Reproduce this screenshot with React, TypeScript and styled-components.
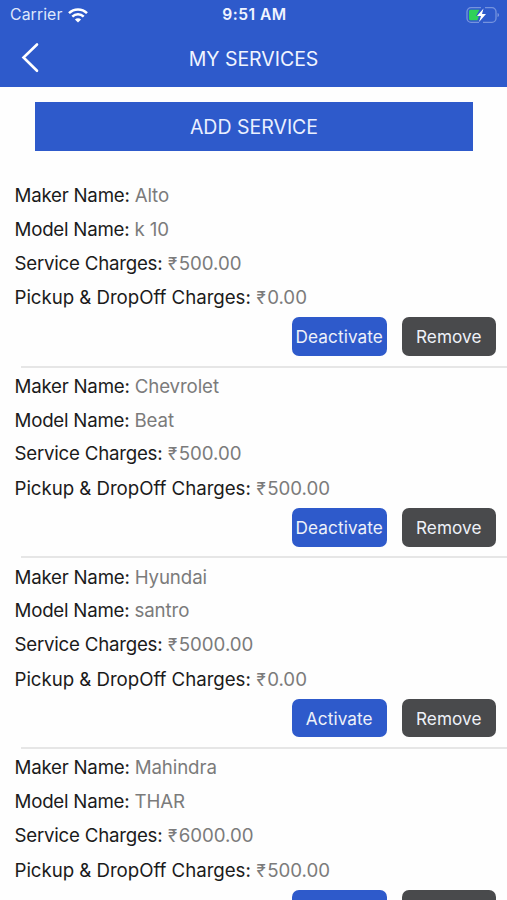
import React from 'react';
import styled, { createGlobalStyle } from 'styled-components';

const GlobalStyle = createGlobalStyle`
  * { box-sizing: border-box; }
  html, body { margin: 0; background: #fefefe; }
  body { overflow: hidden; }
`;

const Screen = styled.div`
  width: 507px;
  height: 900px;
  overflow: hidden;
  display: flex;
  flex-direction: column;
  background: #fefefe;
  font-family: Inter, "Noto Sans", sans-serif;
  color: #1b1b1b;
`;

const Header = styled.header`
  flex: none;
  height: 87px;
  background: #2e5acb;
  color: #f0f4ff;
`;

const StatusBar = styled.div`
  height: 29px;
  padding: 0 8px 0 10px;
  display: grid;
  grid-template-columns: 1fr auto 1fr;
  align-items: center;
`;

const Carrier = styled.div`
  display: flex;
  align-items: center;
  gap: 6px;
  font-size: 15.8px;
  line-height: 30px;
  letter-spacing: 0.1px;
  color: #dfe7fb;
`;

const Clock = styled.div`
  font-size: 15.6px;
  font-weight: 600;
  line-height: 30px;
  letter-spacing: 0.5px;
`;

const Battery = styled.svg`
  justify-self: end;
`;

const NavBar = styled.div`
  height: 58px;
  padding: 0 20px;
  display: grid;
  grid-template-columns: 1fr auto 1fr;
  align-items: center;
`;

const BackButton = styled.button`
  width: 22px;
  height: 32px;
  padding: 0;
  border: 0;
  background: none;
  color: #fff;
  svg { display: block; }
`;

const Title = styled.h1`
  margin: 0;
  padding-top: 2px;
  font-size: 19.5px;
  font-weight: 400;
  letter-spacing: -0.02px;
  white-space: nowrap;
`;

const AddButton = styled.button`
  flex: none;
  height: 49px;
  margin: 15px 34px 0 35px;
  border: 0;
  background: #2e5acb;
  color: #eaf0ff;
  font: 400 19.5px Inter, sans-serif;
  letter-spacing: 0;
`;

const List = styled.main`
  margin-top: 28px;
`;

const Card = styled.section`
  height: 190.8px;
  display: flex;
  flex-direction: column;
`;

const Field = styled.div<{ $tall?: boolean }>`
  height: ${(p) => (p.$tall ? 36 : 33.8)}px;
  line-height: ${(p) => (p.$tall ? 36 : 33.8)}px;
  padding-left: 14.5px;
  font-size: 18.7px;
  letter-spacing: ${(p) => (p.$tall ? -0.05 : -0.23)}px;
  white-space: nowrap;
`;

const Value = styled.span<{ $amount?: boolean }>`
  color: #7b7b7b;
  letter-spacing: ${(p) => (p.$amount ? 0 : -0.1)}px;
`;

const Rupee = styled.span`
  font-size: 17px;
  margin: 0 1.4px 0 0.6px;
`;

const Actions = styled.div`
  display: flex;
  justify-content: flex-end;
  gap: 15px;
  margin-top: 1px;
  padding-right: 11px;
`;

const Action = styled.button<{ $dark?: boolean }>`
  width: 94.5px;
  height: 38.5px;
  padding: 0;
  border: 0;
  border-radius: 7px;
  background: ${(p) => (p.$dark ? '#494a4c' : '#2e5acb')};
  color: #eef1f8;
  font: 400 17.2px Inter, sans-serif;
  letter-spacing: 0.08px;
`;

const Divider = styled.hr`
  width: 486px;
  height: 2px;
  margin: 9.7px 0 0 21px;
  border: 0;
  background: #e6e6e6;
`;

const services = [
  { maker: 'Alto', model: 'k 10', service: '500.00', pickup: '0.00', active: true },
  { maker: 'Chevrolet', model: 'Beat', service: '500.00', pickup: '500.00', active: true },
  { maker: 'Hyundai', model: 'santro', service: '5000.00', pickup: '0.00', active: false },
  { maker: 'Mahindra', model: 'THAR', service: '6000.00', pickup: '500.00', active: true },
];

function WifiIcon() {
  return (
    <svg width="20" height="15" viewBox="0 0 20 15" fill="none" stroke="#fff" strokeWidth="2.5">
      <path d="M1 5.2a12.8 12.8 0 0 1 18 0" />
      <path d="M4.3 8.7a8.1 8.1 0 0 1 11.4 0" />
      <path d="M10 14.6 6.9 11.5a4.4 4.4 0 0 1 6.2 0z" fill="#fff" stroke="none" />
    </svg>
  );
}

function BatteryIcon() {
  return (
    <Battery width="34" height="18" viewBox="0 0 34 18" fill="none">
      <path d="M16 1.7H6a4 4 0 0 0-4 4v6.6a4 4 0 0 0 4 4h8M20 1.7h7a4 4 0 0 1 4 4v6.6a4 4 0 0 1-4 4h-9" stroke="#7593de" strokeWidth="1.3" />
      <path d="M32.5 7v4c1.2-.4 1.6-1.1 1.6-2s-.4-1.6-1.6-2z" fill="#7593de" />
      <path d="M5.5 3.8h9L11 10h3l-1.5 4.2h-7A1.5 1.5 0 0 1 4 12.7V5.3a1.5 1.5 0 0 1 1.5-1.5z" fill="#30d158" />
      <path d="M18.5 2.500 12 10h4l-2 6 7-8h-4z" fill="#fff" />
    </Battery>
  );
}

function Amount({ value }: { value: string }) {
  return (
    <Value $amount>
      <Rupee>₹</Rupee>{value}
    </Value>
  );
}

export default function App() {
  return (
    <Screen>
      <GlobalStyle />
      <Header>
        <StatusBar>
          <Carrier>Carrier <WifiIcon /></Carrier>
          <Clock>9:51 AM</Clock>
          <BatteryIcon />
        </StatusBar>
        <NavBar>
          <BackButton aria-label="Back">
            <svg width="22" height="32" viewBox="0 0 22 32" fill="none" stroke="currentColor" strokeWidth="2.6">
              <path d="M17 2.500 3.500 15.500 17 28.800" strokeLinecap="round" strokeLinejoin="miter" />
            </svg>
          </BackButton>
          <Title>MY SERVICES</Title>
        </NavBar>
      </Header>
      <AddButton>ADD SERVICE</AddButton>
      <List>
        {services.map((s) => (
          <Card key={s.maker}>
            <Field>Maker Name: <Value>{s.maker}</Value></Field>
            <Field>Model Name: <Value>{s.model}</Value></Field>
            <Field>Service Charges: <Amount value={s.service} /></Field>
            <Field $tall>Pickup &amp; DropOff Charges: <Amount value={s.pickup} /></Field>
            <Actions>
              <Action>{s.active ? 'Deactivate' : 'Activate'}</Action>
              <Action $dark>Remove</Action>
            </Actions>
            <Divider />
          </Card>
        ))}
      </List>
    </Screen>
  );
}
